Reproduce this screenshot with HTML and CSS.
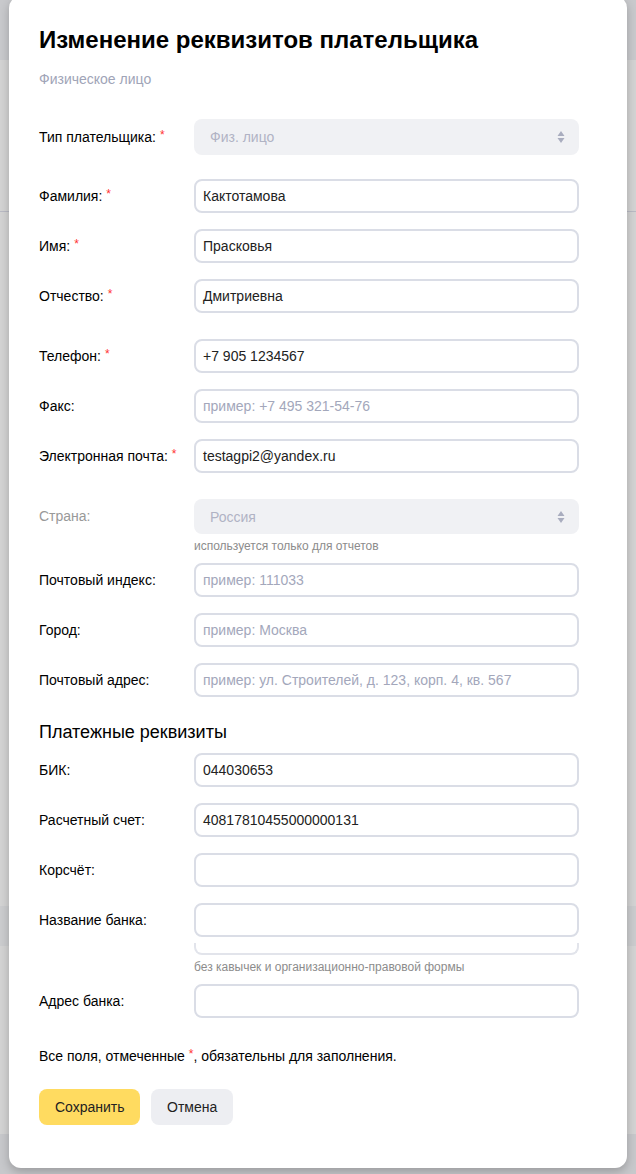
FILE: index.html
```html
<!DOCTYPE html>
<html lang="ru">
<head>
<meta charset="utf-8">
<title>Изменение реквизитов плательщика</title>
<link rel="stylesheet" href="styles.css">
</head>
<body>
<div class="backdrop">
  <div class="modal">
    <h1 class="title">Изменение реквизитов плательщика</h1>
    <div class="subtitle">Физическое лицо</div>

    <div class="group group-first">
      <div class="row">
        <div class="label">Тип плательщика:<span class="req">*</span></div>
        <div class="field">
          <div class="select select-type disabled"><span>Физ. лицо</span>
            <svg class="arrows" width="8" height="14" viewBox="0 0 8 14"><path d="M4 1 L7.5 6 H0.5 Z M4 13 L7.5 8 H0.5 Z" fill="#a9adbf"/></svg>
          </div>
        </div>
      </div>
    </div>

    <div class="group group-second">
      <div class="row">
        <div class="label">Фамилия:<span class="req">*</span></div>
        <div class="field"><div class="input">Кактотамова</div></div>
      </div>
      <div class="row">
        <div class="label">Имя:<span class="req">*</span></div>
        <div class="field"><div class="input">Прасковья</div></div>
      </div>
      <div class="row">
        <div class="label">Отчество:<span class="req">*</span></div>
        <div class="field"><div class="input">Дмитриевна</div></div>
      </div>
    </div>

    <div class="group">
      <div class="row">
        <div class="label">Телефон:<span class="req">*</span></div>
        <div class="field"><div class="input">+7 905 1234567</div></div>
      </div>
      <div class="row">
        <div class="label">Факс:</div>
        <div class="field"><div class="input placeholder">пример: +7 495 321-54-76</div></div>
      </div>
      <div class="row">
        <div class="label">Электронная почта:<span class="req">*</span></div>
        <div class="field"><div class="input">testagpi2@yandex.ru</div></div>
      </div>
    </div>

    <div class="group">
      <div class="row row-hint">
        <div class="label label-disabled">Страна:</div>
        <div class="field">
          <div class="select disabled"><span>Россия</span>
            <svg class="arrows" width="8" height="14" viewBox="0 0 8 14"><path d="M4 1 L7.5 6 H0.5 Z M4 13 L7.5 8 H0.5 Z" fill="#a9adbf"/></svg>
          </div>
          <div class="hint">используется только для отчетов</div>
        </div>
      </div>
      <div class="row">
        <div class="label">Почтовый индекс:</div>
        <div class="field"><div class="input placeholder">пример: 111033</div></div>
      </div>
      <div class="row">
        <div class="label">Город:</div>
        <div class="field"><div class="input placeholder">пример: Москва</div></div>
      </div>
      <div class="row">
        <div class="label">Почтовый адрес:</div>
        <div class="field"><div class="input placeholder">пример: ул. Строителей, д. 123, корп. 4, кв. 567</div></div>
      </div>
    </div>

    <h2 class="section">Платежные реквизиты</h2>

    <div class="row">
      <div class="label">БИК:</div>
      <div class="field"><div class="input">044030653</div></div>
    </div>
    <div class="row">
      <div class="label">Расчетный счет:</div>
      <div class="field"><div class="input">40817810455000000131</div></div>
    </div>
    <div class="row">
      <div class="label">Корсчёт:</div>
      <div class="field"><div class="input"></div></div>
    </div>
    <div class="row row-hint">
      <div class="label">Название банка:</div>
      <div class="field">
        <div class="input"></div>
        <div class="suggest"></div>
        <div class="hint">без кавычек и организационно-правовой формы</div>
      </div>
    </div>
    <div class="row">
      <div class="label">Адрес банка:</div>
      <div class="field"><div class="input"></div></div>
    </div>

    <p class="note">Все поля, отмеченные <span class="req req-inline">*</span>, обязательны для заполнения.</p>

    <div class="buttons">
      <button class="btn btn-primary">Сохранить</button>
      <button class="btn btn-secondary">Отмена</button>
    </div>
  </div>
</div>
</body>
</html>
```
FILE: styles.css
```css
* { box-sizing: border-box; }
html, body {
  margin: 0;
  padding: 0;
}
body {
  width: 636px;
  height: 1174px;
  overflow: hidden;
  font-family: "Liberation Sans", Arial, sans-serif;
  color: #000;
  background:
    linear-gradient(to bottom,
      #c8c9cc 0, #c8c9cc 60px,
      #d3d3d3 60px, #d3d3d3 211px,
      #b9bac4 211px, #b9bac4 212px,
      #d3d3d3 212px, #d3d3d3 906px,
      #cbccce 906px, #cbccce 946px,
      #d3d3d3 946px, #d3d3d3 1134px,
      #c7c8cb 1134px, #c7c8cb 100%);
}
.backdrop {
  padding: 0 9px;
}
.modal {
  width: 618px;
  margin-top: -4px;
  background: #fff;
  border-radius: 12px;
  box-shadow: 0 4px 10px rgba(0, 0, 0, 0.22);
  padding: 30px 48px 43px 30px;
}
.title {
  margin: 0;
  font-size: 24px;
  line-height: 28px;
  font-weight: bold;
  color: #000;
}
.subtitle {
  margin-top: 17px;
  font-size: 14px;
  line-height: 17px;
  color: #a0a4b7;
}
.group { margin-top: 26px; }
.group-first { margin-top: 31px; }
.group-second { margin-top: 24px; }
.row {
  display: flex;
  align-items: flex-start;
  margin-bottom: 16px;
}
.group .row:last-child { margin-bottom: 0; }
.row.row-hint { margin-bottom: 10px; }
.label {
  width: 155px;
  flex: none;
  font-size: 14px;
  line-height: 34px;
  height: 34px;
  color: #000;
  white-space: nowrap;
}
.group-first .label { line-height: 36px; height: 36px; }
.label-disabled { color: #999; }
.req {
  color: #f33;
  font-size: 12px;
  line-height: 0;
  margin-left: 4px;
  vertical-align: 3px;
}
.req-inline { margin-left: 0; }
.field {
  width: 385px;
  flex: none;
}
.input {
  height: 34px;
  border: 2px solid #dadde6;
  border-radius: 8px;
  padding: 0 7px;
  font-size: 14px;
  line-height: 30px;
  color: #222;
  white-space: nowrap;
  overflow: hidden;
}
.input.placeholder { color: #a3a7bb; }
.select {
  height: 35px;
  border-radius: 8px;
  background: #f0f1f4;
  padding: 0 14px 0 16px;
  display: flex;
  align-items: center;
  justify-content: space-between;
  font-size: 14px;
  color: #b0b3c4;
}
.select-type { height: 36px; }
.arrows { display: block; }
.hint {
  margin-top: 5px;
  font-size: 12px;
  line-height: 14px;
  color: #8c8c8c;
}
.suggest {
  margin-top: 6px;
  height: 12px;
  border: 2px solid #e2e4eb;
  border-top: none;
  border-radius: 0 0 8px 8px;
}
.section {
  margin: 23px 0 9px;
  font-size: 18px;
  line-height: 24px;
  font-weight: normal;
  color: #000;
}
.note {
  margin: 29px 0 0;
  font-size: 14px;
  line-height: 18px;
  color: #000;
}
.buttons {
  margin-top: 24px;
  display: flex;
  gap: 11px;
}
.btn {
  height: 36px;
  border: none;
  border-radius: 8px;
  font-family: "Liberation Sans", Arial, sans-serif;
  font-size: 14px;
  color: #222;
  padding: 0 16px;
}
.btn-primary { background: #ffdb60; width: 101px; }
.btn-secondary { background: #edeef2; width: 82px; }
```
